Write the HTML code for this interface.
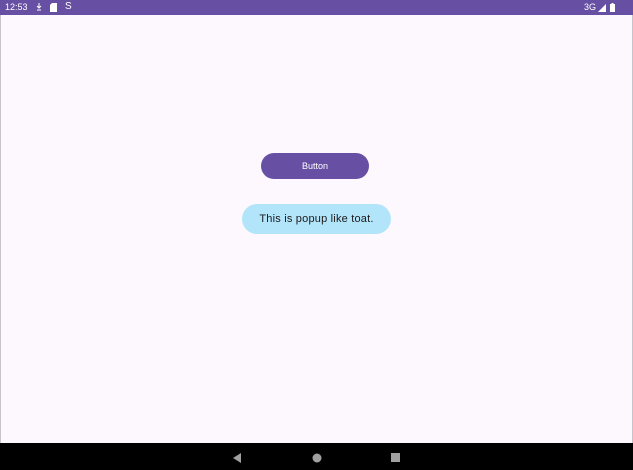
<!DOCTYPE html>
<html><head><meta charset="utf-8"><style>
*{margin:0;padding:0;box-sizing:border-box}
html,body{width:633px;height:470px;overflow:hidden;background:#fdf7fe;font-family:"Liberation Sans",sans-serif}
.sb{position:absolute;left:0;top:0;width:633px;height:15px;background:#6750a4;color:#fff;font-size:9px}
.main{position:absolute;left:0;top:15px;width:633px;height:428px;background:#fdf7fe;border-left:1px solid #c8c4cc;border-right:1px solid #c8c4cc}
.nav{position:absolute;left:0;top:443px;width:633px;height:27px;background:#000}
.btn{position:absolute;left:261px;top:153px;width:108px;height:26px;border-radius:13px;background:#6750a4;color:#fff;font-size:9px;text-align:center;line-height:26px}
.toast{position:absolute;left:242px;top:204px;width:149px;height:30px;border-radius:15px;background:#b3e5fa;color:#1a1a1a;font-size:11px;letter-spacing:0.2px;text-align:center;line-height:30px}
</style></head><body>
<div class="sb">
<span style="position:absolute;left:5px;top:2px">12:53</span>
<svg style="position:absolute;left:36px;top:3px" width="6" height="8"><path d="M3 0v4M1 3l2 2 2-2M1 7h4" stroke="#fff" stroke-width="1" fill="none"/></svg>
<svg style="position:absolute;left:50px;top:3px" width="7" height="9"><path d="M2 0h5v9H0V2z" fill="#fff"/></svg>
<span style="position:absolute;left:65px;top:1px;font-size:10px">S</span>
<span style="position:absolute;left:584px;top:2px">3G</span>
<svg style="position:absolute;left:598px;top:4px" width="8" height="8"><path d="M8 0v8H0z" fill="#fff"/></svg>
<svg style="position:absolute;left:610px;top:3px" width="5" height="9"><rect x="0" y="1" width="5" height="8" fill="#fff"/><rect x="1.5" y="0" width="2" height="1" fill="#fff"/></svg>
</div>
<div class="main"></div>
<div class="btn">Button</div>
<div class="toast">This is popup like toat.</div>
<div class="nav">
<svg style="position:absolute;left:232px;top:10px" width="10" height="10"><path d="M9 0v10L1 5z" fill="#a0a0a0"/></svg>
<svg style="position:absolute;left:312px;top:10px" width="10" height="10"><circle cx="5" cy="5" r="4.5" fill="#a0a0a0"/></svg>
<svg style="position:absolute;left:391px;top:10px" width="9" height="9"><rect width="9" height="9" fill="#a0a0a0"/></svg>
</div>
</body></html>
